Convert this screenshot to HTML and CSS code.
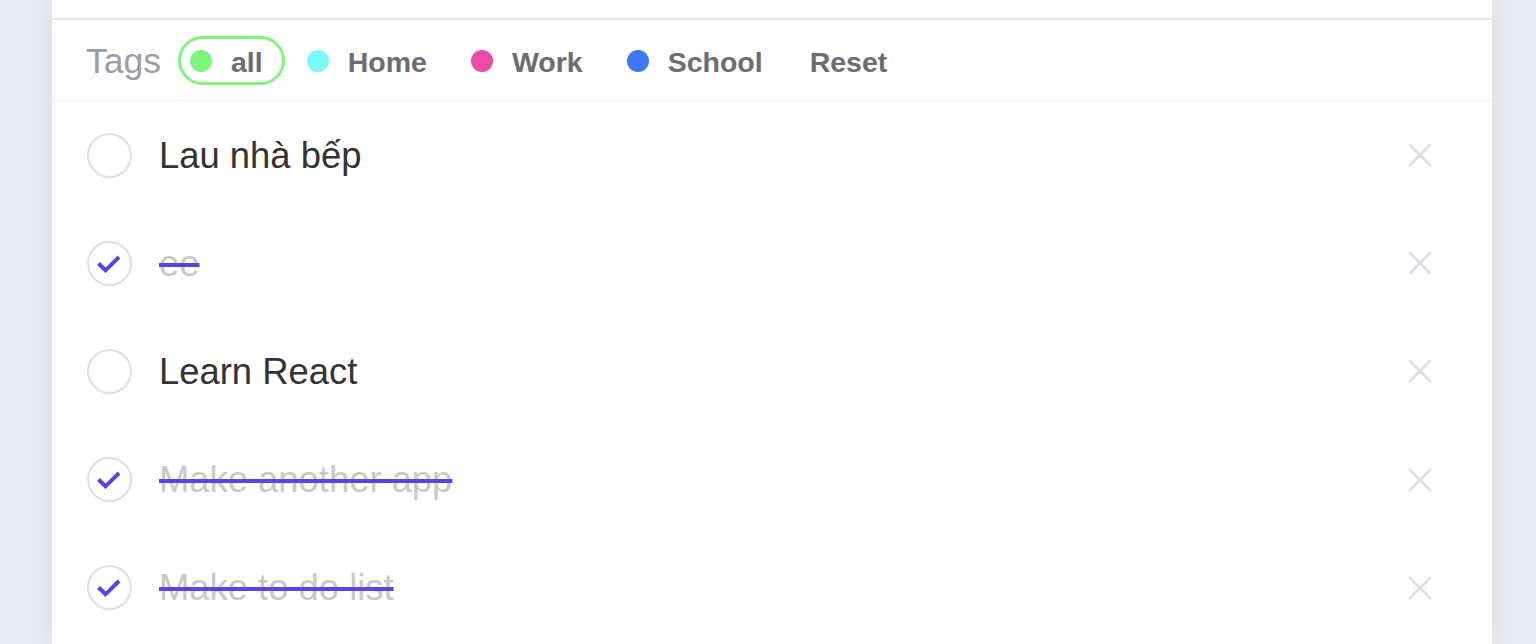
FILE: index.html
```html
<!DOCTYPE html>
<html lang="vi">
<head>
<meta charset="utf-8">
<title>Todos</title>
<link rel="stylesheet" href="styles.css">
</head>
<body>
<main class="card">
  <div class="card-top"></div>
  <div class="tags">
    <span class="tags-label">Tags</span>
    <button class="tag tag-active"><span class="dot dot-all"></span><span class="tag-name">all</span></button>
    <button class="tag"><span class="dot dot-home"></span><span class="tag-name">Home</span></button>
    <button class="tag"><span class="dot dot-work"></span><span class="tag-name">Work</span></button>
    <button class="tag"><span class="dot dot-school"></span><span class="tag-name">School</span></button>
    <button class="tag tag-reset"><span class="tag-name">Reset</span></button>
  </div>
  <ul class="todos">
    <li class="todo">
      <span class="check"></span>
      <span class="todo-text">Lau nhà bếp</span>
      <span class="remove"><svg viewBox="0 0 24 24" width="24" height="24"><path d="M2 2 L22 22 M22 2 L2 22"/></svg></span>
    </li>
    <li class="todo done">
      <span class="check"><svg viewBox="0 0 45 45" width="45" height="45"><path d="M11.5 22.5 L18.5 29.3 L32 16"/></svg></span>
      <span class="todo-text">ee</span>
      <span class="remove"><svg viewBox="0 0 24 24" width="24" height="24"><path d="M2 2 L22 22 M22 2 L2 22"/></svg></span>
    </li>
    <li class="todo">
      <span class="check"></span>
      <span class="todo-text">Learn React</span>
      <span class="remove"><svg viewBox="0 0 24 24" width="24" height="24"><path d="M2 2 L22 22 M22 2 L2 22"/></svg></span>
    </li>
    <li class="todo done">
      <span class="check"><svg viewBox="0 0 45 45" width="45" height="45"><path d="M11.5 22.5 L18.5 29.3 L32 16"/></svg></span>
      <span class="todo-text">Make another app</span>
      <span class="remove"><svg viewBox="0 0 24 24" width="24" height="24"><path d="M2 2 L22 22 M22 2 L2 22"/></svg></span>
    </li>
    <li class="todo done">
      <span class="check"><svg viewBox="0 0 45 45" width="45" height="45"><path d="M11.5 22.5 L18.5 29.3 L32 16"/></svg></span>
      <span class="todo-text">Make to do list</span>
      <span class="remove"><svg viewBox="0 0 24 24" width="24" height="24"><path d="M2 2 L22 22 M22 2 L2 22"/></svg></span>
    </li>
  </ul>
</main>
</body>
</html>
```
FILE: styles.css
```css
* { box-sizing: border-box; }

html, body {
  margin: 0;
  padding: 0;
  height: 100%;
}

body {
  background: #e9e9f0;
  font-family: "Liberation Sans", Arial, sans-serif;
  overflow: hidden;
}

.card {
  width: 1440px;
  margin-left: 52px;
  min-height: 644px;
  background: #ffffff;
  box-shadow: 0 0 24px rgba(40, 40, 90, 0.07);
}

.card-top {
  height: 20px;
  border-bottom: 2px solid #e2e1ec;
}

.tags {
  height: 81px;
  display: flex;
  align-items: center;
  padding-left: 34px;
  padding-top: 1px;
  border-bottom: 1px solid #eeeef3;
}

.tags-label {
  font-size: 35.5px;
  color: #9c9ba6;
  margin-right: 17px;
  margin-top: 1px;
}

.tag {
  display: flex;
  align-items: center;
  gap: 19px;
  height: 49px;
  padding: 0 19px 0 9px;
  margin-right: 10px;
  border: 3px solid transparent;
  border-radius: 25px;
  background: none;
  font-family: "Liberation Sans", Arial, sans-serif;
  cursor: pointer;
}

.tag-active {
  border-color: #80f57e;
}

.tag-name {
  font-size: 28.5px;
  font-weight: 700;
  color: #6c6c73;
  margin-top: 3px;
}

.dot {
  width: 22px;
  height: 22px;
  border-radius: 50%;
}

.dot-all { background: #7ef67c; }
.dot-home { background: #7bf8fa; }
.dot-work { background: #ea4ba6; }
.dot-school { background: #3f78f5; }

.tag-reset {
  padding-left: 12px;
}

.todos {
  list-style: none;
  margin: 0;
  padding: 0;
}

.todo {
  height: 108.2px;
  display: flex;
  align-items: center;
  padding-left: 35px;
  padding-right: 60px;
}

.check {
  width: 45px;
  height: 45px;
  flex: none;
  border: 2px solid #dedcee;
  border-radius: 50%;
  position: relative;
  margin-right: 27px;
}

.check svg {
  position: absolute;
  left: -2px;
  top: -2px;
  fill: none;
  stroke: #5842e9;
  stroke-width: 4;
  stroke-linecap: butt;
  stroke-linejoin: miter;
}

.todo-text {
  flex: 1;
  font-size: 36.4px;
  color: #333333;
  margin-top: 1px;
}

.done .todo-text {
  color: #c9c9ca;
  text-decoration: line-through;
  text-decoration-color: #5843e9;
  text-decoration-thickness: 4px;
}

.remove {
  width: 24px;
  height: 24px;
  flex: none;
  display: flex;
}

.remove svg {
  fill: none;
  stroke: #dcdbeb;
  stroke-width: 2.6;
  stroke-linecap: round;
}
```
